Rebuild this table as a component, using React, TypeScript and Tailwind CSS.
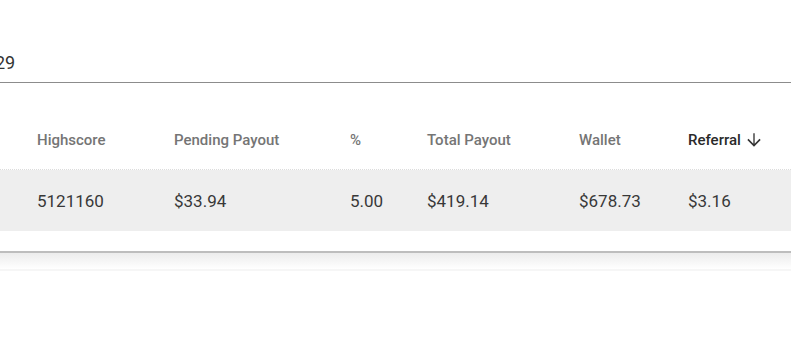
const cols = 'grid grid-cols-[37px_137px_176px_77px_152px_109px_1fr]';

const headers = ['Highscore', 'Pending Payout', '%', 'Total Payout', 'Wallet'];
const row = ['5121160', '$33.94', '5.00', '$419.14', '$678.73', '$3.16'];

function ArrowDownward() {
  return (
    <svg width="20" height="20" viewBox="0 0 24 24" className="fill-[#333]">
      <path d="M20 12l-1.41-1.41L12.8 16.4V4h-1.6v12.4L5.41 10.59 4 12l8 8 8-8z" />
    </svg>
  );
}

export default function App() {
  return (
    <div className="w-[791px] h-[363px] bg-white overflow-hidden font-['Roboto',sans-serif]">
      <div className="pt-[50px] h-[84px]">
        <div className="h-[33px] border-b border-[#8c8c8c] overflow-hidden">
          <div className="-ml-[5px] text-[18px] leading-[26px] text-[#333]">29</div>
        </div>
      </div>
      <div className="border-b-2 border-[#bdbdbd]">
        <div className={`${cols} h-[86px] content-end pb-[19px] border-b border-dotted border-[#dcdcdc] text-[15px] leading-[20px] font-medium text-[#757575]`}>
          <div />
          {headers.map(h => <div key={h}>{h}</div>)}
          <div className="flex items-center gap-[3px] text-[#2a2a2a]">
            Referral
            <ArrowDownward />
          </div>
          <div />
        </div>
        <div className={`${cols} h-[61px] content-center bg-[#eeeeee] text-[17px] leading-[24px] text-[#383838]`}>
          <div />
          {row.map((v, i) => <div key={i}>{v}</div>)}
          <div />
        </div>
        <div className="h-[20px]" />
      </div>
      <div className="h-[16px] bg-gradient-to-b from-[#ececec] to-white" />
      <div className="h-[2px] bg-[#f6f6f6]" />
    </div>
  );
}
